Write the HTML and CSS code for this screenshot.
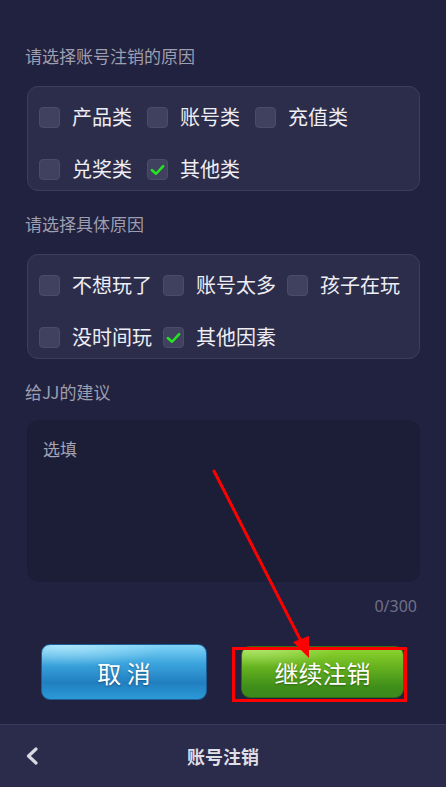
FILE: index.html
```html
<!DOCTYPE html>
<html lang="zh-CN">
<head>
<meta charset="UTF-8">
<title>账号注销</title>
<link rel="stylesheet" href="styles.css">
</head>
<body>
<div class="page">
  <div class="section-title">请选择账号注销的原因</div>
  <div class="option-box box-type">
    <div class="option"><span class="check"></span><span class="option-text">产品类</span></div>
    <div class="option"><span class="check"></span><span class="option-text">账号类</span></div>
    <div class="option"><span class="check"></span><span class="option-text">充值类</span></div>
    <div class="option"><span class="check"></span><span class="option-text">兑奖类</span></div>
    <div class="option"><span class="check checked"><svg viewBox="0 0 20 20"><path d="M4 10.5 L8.5 14.5 L16 6.5" /></svg></span><span class="option-text">其他类</span></div>
  </div>

  <div class="section-title">请选择具体原因</div>
  <div class="option-box box-detail">
    <div class="option"><span class="check"></span><span class="option-text">不想玩了</span></div>
    <div class="option"><span class="check"></span><span class="option-text">账号太多</span></div>
    <div class="option"><span class="check"></span><span class="option-text">孩子在玩</span></div>
    <div class="option"><span class="check"></span><span class="option-text">没时间玩</span></div>
    <div class="option"><span class="check checked"><svg viewBox="0 0 20 20"><path d="M4 10.5 L8.5 14.5 L16 6.5" /></svg></span><span class="option-text">其他因素</span></div>
  </div>

  <div class="section-title title-suggest">给JJ的建议</div>
  <div class="suggest-box">
    <div class="placeholder">选填</div>
  </div>
  <div class="counter">0/300</div>

  <div class="button-row">
    <div class="btn btn-cancel">取 消</div>
    <div class="btn btn-continue">继续注销</div>
  </div>
</div>

<div class="bottom-bar">
  <svg class="back-icon" viewBox="0 0 14 18"><path d="M11 2 L3.5 9 L11 16" /></svg>
  <div class="bar-title">账号注销</div>
</div>

<div class="mark-rect"></div>
<svg class="mark-arrow" width="446" height="787" viewBox="0 0 446 787">
  <line x1="214" y1="471" x2="303" y2="645" />
  <polygon points="309,658 293,642 309,636" />
</svg>
</body>
</html>
```

FILE: styles.css
```css
body {
  margin: 0;
  background-color: #21223f;
  font-family: 'Noto Sans CJK SC', 'Noto Sans', sans-serif;
  color: #ececf2;
  width: 446px;
  height: 787px;
  overflow: hidden;
  position: relative;
}

.page {
  padding: 45px 26px 0 25px;
}

.section-title {
  font-size: 17px;
  line-height: 22px;
  color: #9d9eb0;
  margin-bottom: 19px;
}

.title-suggest {
  margin-bottom: 17px;
}

.option-box {
  margin-left: 2px;
  margin-bottom: 22px;
  background-color: #2c2d4b;
  border: 1px solid #3d3e5e;
  border-radius: 11px;
  padding: 20px 0 11px 11px;
  display: flex;
  flex-wrap: wrap;
  row-gap: 32px;
}

.box-type {
  column-gap: 15px;
}

.box-detail {
  column-gap: 11px;
}

.option {
  display: flex;
  align-items: center;
  height: 20px;
}

.check {
  width: 19px;
  height: 19px;
  background-color: #40415f;
  border: 1px solid #4b4c6b;
  border-radius: 4px;
  margin-right: 12px;
  display: flex;
}

.check svg {
  width: 19px;
  height: 19px;
}

.check svg path {
  fill: none;
  stroke: #25e51f;
  stroke-width: 2.6;
  stroke-linecap: round;
  stroke-linejoin: round;
}

.option-text {
  font-size: 20px;
  line-height: 20px;
  color: #eeeef4;
}

.suggest-box {
  margin-left: 2px;
  height: 162px;
  background-color: #1c1d36;
  border-radius: 12px;
  padding: 18px 16px 0;
  box-sizing: border-box;
}

.placeholder {
  font-size: 17px;
  line-height: 22px;
  color: #a3a4b5;
}

.counter {
  text-align: right;
  font-family: 'Noto Sans', sans-serif;
  font-size: 16px;
  line-height: 22px;
  color: #6f7089;
  margin-top: 13px;
  padding-right: 3px;
}

.button-row {
  display: flex;
  align-items: center;
  margin-top: 27px;
  padding-left: 16px;
  gap: 34px;
}

.btn {
  display: flex;
  align-items: center;
  justify-content: center;
  box-sizing: border-box;
  border-radius: 9px;
  color: #ffffff;
  font-size: 24px;
  text-shadow: 0 1px 2px rgba(0, 0, 0, 0.35);
}

.btn-cancel {
  width: 166px;
  height: 56px;
  border: 1px solid #1e5d94;
  background:
    radial-gradient(ellipse 60% 40% at 15% 0%, rgba(210, 245, 255, 0.55), rgba(210, 245, 255, 0) 100%),
    linear-gradient(#7fd4f7 0%, #3aa3dc 35%, #217fc0 70%, #2b9ad6 100%);
}

.btn-continue {
  width: 163px;
  height: 52px;
  border: 1px solid #2f6d12;
  background:
    radial-gradient(ellipse 50% 40% at 10% 0%, rgba(220, 255, 180, 0.5), rgba(220, 255, 180, 0) 100%),
    linear-gradient(#8ed62e 0%, #66b21f 40%, #3f8e1a 80%, #3c8a1c 100%);
}

.bottom-bar {
  position: absolute;
  left: 0;
  right: 0;
  bottom: 0;
  height: 62px;
  background-color: #2b2c4b;
  border-top: 1px solid #393a59;
  display: flex;
  align-items: center;
  justify-content: center;
}

.back-icon {
  position: absolute;
  left: 25px;
  top: 22px;
  width: 14px;
  height: 18px;
}

.back-icon path {
  fill: none;
  stroke: #d9d9e2;
  stroke-width: 3.2;
  stroke-linecap: round;
  stroke-linejoin: round;
}

.bar-title {
  font-size: 18px;
  font-weight: bold;
  color: #dedee6;
}

.mark-rect {
  position: absolute;
  left: 232px;
  top: 647px;
  width: 175px;
  height: 55px;
  box-sizing: border-box;
  border: 3px solid #ff0000;
}

.mark-arrow {
  position: absolute;
  left: 0;
  top: 0;
  pointer-events: none;
}

.mark-arrow line {
  stroke: #ff0000;
  stroke-width: 3;
  stroke-linecap: round;
}

.mark-arrow polygon {
  fill: #ff0000;
}
```
